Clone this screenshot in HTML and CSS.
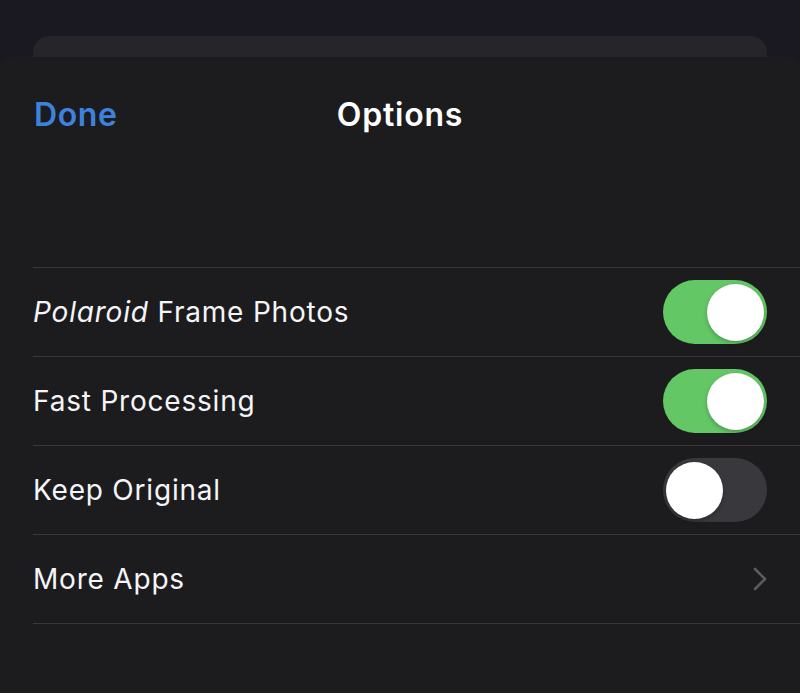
FILE: index.html
```html
<!DOCTYPE html>
<html>
<head>
<meta charset="utf-8">
<link rel="stylesheet" href="styles.css">
</head>
<body>
<div class="backcard"></div>
<div class="sheet">
  <div class="header">
    <div class="done">Done</div>
    <div class="title">Options</div>
    <div></div>
  </div>
  <div class="list">
    <div class="row">
      <div class="label"><em>Polaroid</em> Frame Photos</div>
      <div class="toggle on"><div class="knob"></div></div>
    </div>
    <div class="row">
      <div class="label">Fast Processing</div>
      <div class="toggle on"><div class="knob"></div></div>
    </div>
    <div class="row">
      <div class="label">Keep Original</div>
      <div class="toggle"><div class="knob"></div></div>
    </div>
    <div class="row">
      <div class="label">More Apps</div>
      <svg class="chevron" width="16" height="24" viewBox="0 0 16 24"><path d="M3 2 L13 12 L3 22" fill="none" stroke="#5b5b60" stroke-width="2.6" stroke-linecap="round" stroke-linejoin="round"/></svg>
    </div>
    <div class="row end"></div>
  </div>
</div>
</body>
</html>
```
FILE: styles.css
```css
html, body {
  margin: 0;
  padding: 0;
}
body {
  width: 800px;
  height: 693px;
  overflow: hidden;
  background: #1a1921;
  font-family: Inter, "Noto Sans", sans-serif;
  color: #ffffff;
}
.backcard {
  margin: 36px 33px 0;
  height: 21px;
  background: #262529;
  border-radius: 16px 16px 0 0;
}
.sheet {
  background: #1c1c1e;
  border-radius: 12px 12px 0 0;
  height: 636px;
}
.header {
  display: grid;
  grid-template-columns: 1fr auto 1fr;
  align-items: center;
  height: 114px;
  padding: 0 34px;
}
.done {
  color: #3d82df;
  font-size: 32px;
  font-weight: 600;
  letter-spacing: 0.6px;
}
.title {
  font-size: 32px;
  font-weight: 600;
  letter-spacing: 0.8px;
}
.list {
  margin-top: 96px;
  padding-left: 33px;
}
.row {
  display: flex;
  align-items: center;
  justify-content: space-between;
  height: 88px;
  border-top: 1px solid #38383b;
  padding-right: 33px;
}
.row.end {
  height: 0;
}
.label {
  font-size: 28px;
  letter-spacing: 0.8px;
  color: #f5f5f7;
}
.label em {
  font-style: italic;
}
.toggle {
  width: 104px;
  height: 64px;
  border-radius: 32px;
  background: #39393d;
  display: flex;
  align-items: center;
  padding: 0 3px;
  box-sizing: border-box;
}
.toggle.on {
  background: #63c766;
  justify-content: flex-end;
}
.knob {
  width: 57px;
  height: 57px;
  border-radius: 50%;
  background: #ffffff;
  box-shadow: 0 2px 4px rgba(0,0,0,0.25);
}
.chevron {
  margin-right: -1px;
}
```
